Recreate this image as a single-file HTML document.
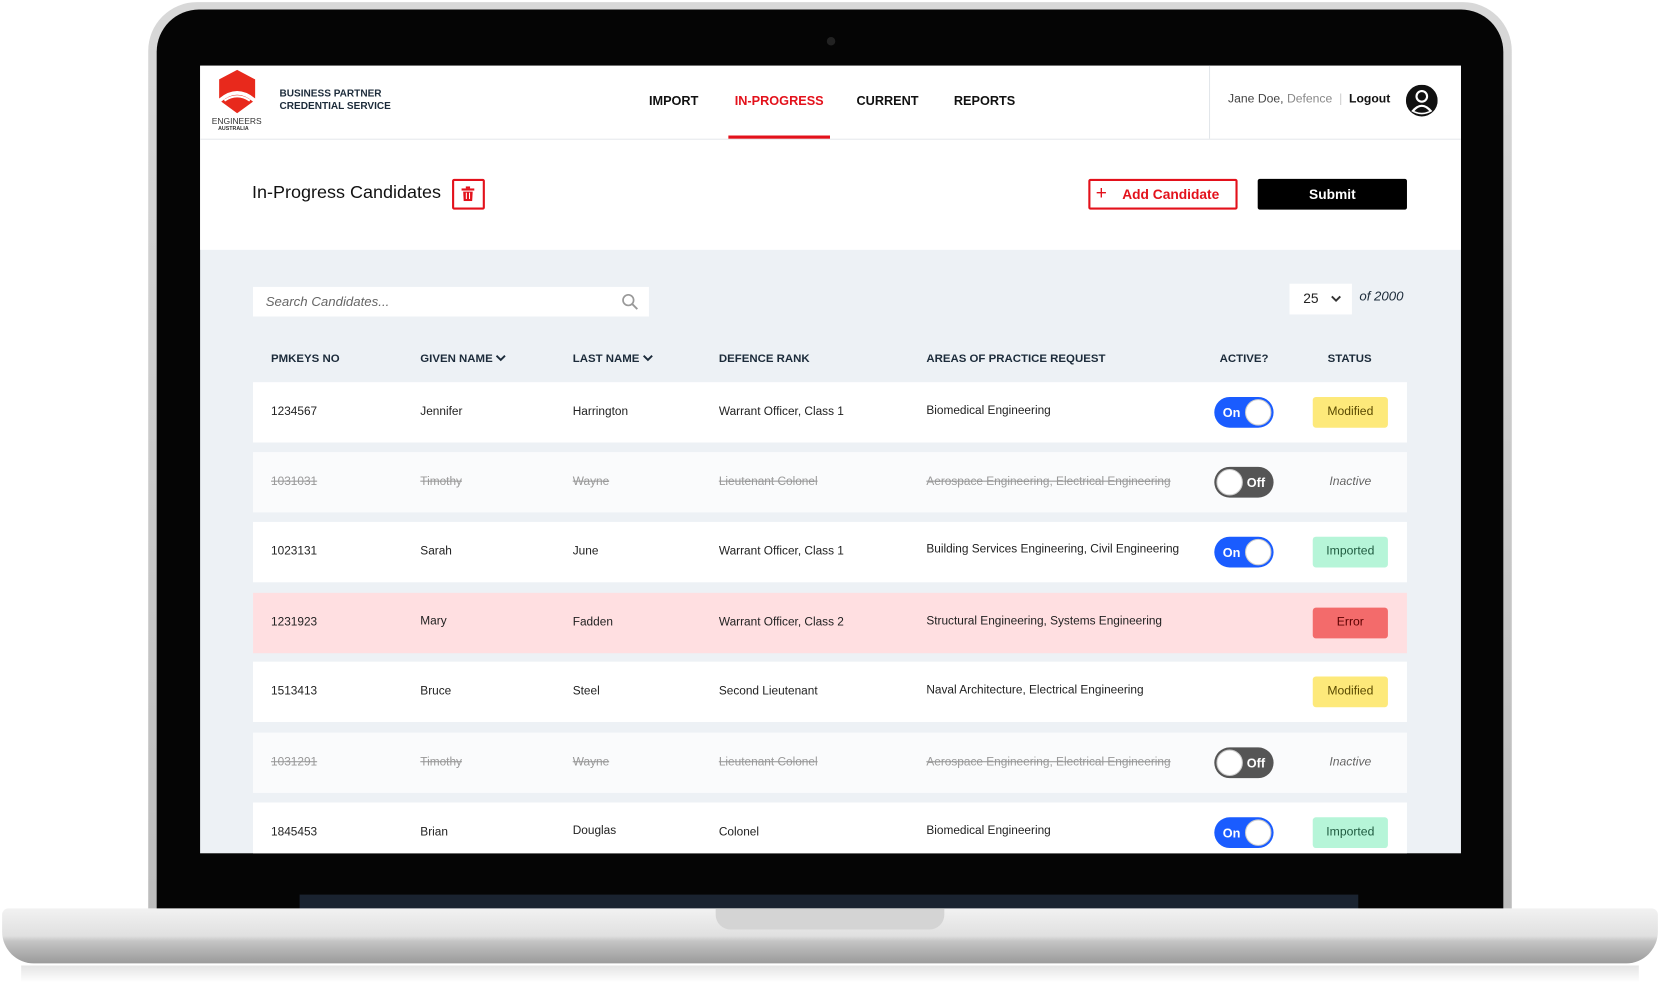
<!DOCTYPE html>
<html><head><meta charset="utf-8"><style>
*{box-sizing:border-box;margin:0;padding:0}
html,body{width:1660px;height:983px;overflow:hidden;background:#fff}
#w{position:absolute;left:0;top:0;width:1568px;height:929px;transform:scale(1.05867);transform-origin:0 0;font-family:"Liberation Sans",sans-serif}
.a{position:absolute}
.t{position:absolute;font-size:11.2px;color:#222;white-space:nowrap}
.row{position:absolute;left:239px;width:1090px;height:57px;background:#fff}
.row .t{top:22px}
.st{text-decoration:line-through;color:#999}
.tg{position:absolute;left:908px;top:14px;width:56px;height:29px;border-radius:15px;font-size:12px;font-weight:bold;color:#fff}
.on{background:#1a5cff}
.off{background:#555}
.tg i{position:absolute;top:2px;width:25px;height:25px;border-radius:50%;background:#fff;border:1px solid #ccc}
.on i{right:2px}.off i{left:2px}
.tg span{position:absolute;top:8px}
.on span{left:8px}.off span{right:8px}
.bd{position:absolute;left:1001px;top:14px;width:71px;height:29px;border-radius:3px;font-size:11.5px;text-align:center;line-height:29px}
.h{position:absolute;top:333px;font-size:10.8px;font-weight:bold;color:#1c2b3a}
</style></head><body><div id="w">
<div class="a" style="left:140px;top:2px;width:1288px;height:870px;border-radius:46px 46px 0 0;background:linear-gradient(#d8d8d8,#bcbcbc)"></div>
<div class="a" style="left:148px;top:9px;width:1272px;height:860px;border-radius:40px 40px 0 0;background:#050505"></div>
<div class="a" style="left:781px;top:35px;width:8px;height:8px;border-radius:50%;background:#222"></div>
<div class="a" style="left:283px;top:845px;width:1000px;height:15px;background:#1a2330"></div>
<div class="a" style="left:2px;top:858px;width:1564px;height:52px;border-radius:6px 6px 30px 30px;background:linear-gradient(#f2f2f2 0%,#e0e0e0 50%,#c4c4c4 60%,#9a9a9a 100%)"></div>
<div class="a" style="left:676px;top:858px;width:216px;height:20px;border-radius:0 0 14px 14px;background:#d4d4d4"></div>
<div class="a" style="left:20px;top:912px;width:1528px;height:16px;background:linear-gradient(#e4e4e4,#fff)"></div>
<div class="a" style="left:189px;top:62px;width:1191px;height:744px;background:#edf1f5;overflow:hidden">
 <div class="a" style="left:0;top:0;width:1191px;height:174px;background:#fff"></div>
 <div class="a" style="left:0;top:69px;width:1191px;height:1px;background:#e6e9ec"></div>
 <div class="a" style="left:953px;top:0;width:1px;height:69px;background:#e2e6ea"></div>
 <svg class="a" style="left:15px;top:3px" width="40" height="44" viewBox="0 0 40 44"><path d="M20 1L37 10V28Q20 14 3 28V10Z" fill="#e8291c"/><path d="M5 31Q20 18 35 31L20 42Z" fill="#e8291c"/><path d="M8 30Q20 22 32 30" stroke="#fff" stroke-width="2" fill="none"/></svg>
 <div class="t" style="left:11px;top:48px;font-size:8px;color:#333">ENGINEERS</div>
 <div class="t" style="left:17px;top:57px;font-size:5px;color:#333;font-weight:bold">AUSTRALIA</div>
 <div class="t" style="left:75px;top:21px;font-size:9.5px;font-weight:bold;color:#1c2b3a;line-height:12px">BUSINESS PARTNER<br>CREDENTIAL SERVICE</div>
 <div class="t" style="left:424px;top:26px;font-size:12px;font-weight:bold;color:#111">IMPORT</div>
 <div class="t" style="left:505px;top:26px;font-size:12px;font-weight:bold;color:#e3111b">IN-PROGRESS</div>
 <div class="a" style="left:499px;top:66px;width:96px;height:3px;background:#e3111b"></div>
 <div class="t" style="left:620px;top:26px;font-size:12px;font-weight:bold;color:#111">CURRENT</div>
 <div class="t" style="left:712px;top:26px;font-size:12px;font-weight:bold;color:#111">REPORTS</div>
 <div class="t" style="left:971px;top:26px;font-size:11.5px;color:#444">Jane Doe, <span style="color:#888">Defence</span> <span style="color:#ccc">&nbsp;|&nbsp;</span> <b style="color:#111">Logout</b></div>
 <svg class="a" style="left:1139px;top:18px" width="30" height="30" viewBox="0 0 30 30"><circle cx="15" cy="15" r="15" fill="#111"/><circle cx="15" cy="11" r="6" fill="#fff"/><path d="M5 25Q15 13 25 25Q15 31 5 25Z" fill="#fff"/><circle cx="15" cy="11" r="4" fill="#111"/><path d="M8 25Q15 17 22 25Q15 28 8 25Z" fill="#111"/></svg>
 <div class="t" style="left:49px;top:110px;font-size:17px;color:#111">In-Progress Candidates</div>
 <div class="a" style="left:238px;top:107px;width:31px;height:29px;border:2px solid #e3111b;border-radius:2px"></div>
 <svg class="a" style="left:246px;top:114px" width="14" height="14" viewBox="0 0 14 14"><rect x="1" y="2" width="12" height="2" fill="#e3111b"/><rect x="5" y="0" width="4" height="2" fill="#e3111b"/><path d="M2.5 5H11.5L11 14H3Z" fill="#e3111b"/><rect x="5" y="6" width="1" height="6" fill="#fff"/><rect x="8" y="6" width="1" height="6" fill="#fff"/></svg>
 <div class="a" style="left:839px;top:107px;width:141px;height:29px;border:2px solid #e3111b;border-radius:2px"></div>
 <div class="t" style="left:846px;top:110px;font-size:18px;color:#e3111b">+</div>
 <div class="t" style="left:871px;top:114px;font-size:13px;font-weight:bold;color:#e3111b">Add Candidate</div>
 <div class="a" style="left:999px;top:107px;width:141px;height:29px;background:#000;border-radius:2px;color:#fff;font-size:13px;font-weight:bold;text-align:center;line-height:29px">Submit</div>
 <div class="a" style="left:50px;top:209px;width:374px;height:28px;background:#fff"></div>
 <div class="t" style="left:62px;top:216px;font-size:12.5px;font-style:italic;color:#666">Search Candidates...</div>
 <svg class="a" style="left:398px;top:215px" width="16" height="16" viewBox="0 0 16 16"><circle cx="6.5" cy="6.5" r="5" stroke="#999" stroke-width="1.6" fill="none"/><path d="M10 10L15 15" stroke="#999" stroke-width="1.8"/></svg>
 <div class="a" style="left:1029px;top:206px;width:59px;height:29px;background:#fff"></div>
 <div class="t" style="left:1042px;top:212px;font-size:13px;color:#222">25</div>
 <svg class="a" style="left:1068px;top:217px" width="10" height="7" viewBox="0 0 10 7"><path d="M1 1L5 5L9 1" stroke="#333" stroke-width="1.8" fill="none"/></svg>
 <div class="t" style="left:1095px;top:211px;font-size:12.5px;font-style:italic;color:#1c2b3a">of 2000</div>
</div>
<div class="h" style="left:256px">PMKEYS NO</div>
<div class="h" style="left:397px">GIVEN NAME <svg width="10" height="7" viewBox="0 0 10 7"><path d="M1 1L5 5L9 1" stroke="#1c2b3a" stroke-width="1.8" fill="none"/></svg></div>
<div class="h" style="left:541px">LAST NAME <svg width="10" height="7" viewBox="0 0 10 7"><path d="M1 1L5 5L9 1" stroke="#1c2b3a" stroke-width="1.8" fill="none"/></svg></div>
<div class="h" style="left:679px">DEFENCE RANK</div>
<div class="h" style="left:875px">AREAS OF PRACTICE REQUEST</div>
<div class="h" style="left:1152px">ACTIVE?</div>
<div class="h" style="left:1254px">STATUS</div>

<div class="row" style="top:361px"><div class="t" style="left:17px">1234567</div><div class="t" style="left:158px">Jennifer</div><div class="t" style="left:302px">Harrington</div><div class="t" style="left:440px">Warrant Officer, Class 1</div><div class="t" style="left:636px;top:21px">Biomedical Engineering</div><div class="tg on"><span>On</span><i></i></div><div class="bd" style="background:#fde97a;color:#5a4a00">Modified</div></div>
<div class="row" style="top:427px;background:#fafbfc"><div class="t st" style="left:17px">1031031</div><div class="t st" style="left:158px">Timothy</div><div class="t st" style="left:302px">Wayne</div><div class="t st" style="left:440px">Lieutenant Colonel</div><div class="t st" style="left:636px">Aerospace Engineering, Electrical Engineering</div><div class="tg off"><i></i><span>Off</span></div><div class="bd" style="font-style:italic;color:#666">Inactive</div></div>
<div class="row" style="top:493px"><div class="t" style="left:17px">1023131</div><div class="t" style="left:158px">Sarah</div><div class="t" style="left:302px">June</div><div class="t" style="left:440px">Warrant Officer, Class 1</div><div class="t" style="left:636px;top:20px">Building Services Engineering, Civil Engineering</div><div class="tg on"><span>On</span><i></i></div><div class="bd" style="background:#b6f5d8;color:#1f5a3f">Imported</div></div>
<div class="row" style="top:560px;background:#ffdfe1"><div class="t" style="left:17px">1231923</div><div class="t" style="left:158px;top:21px">Mary</div><div class="t" style="left:302px">Fadden</div><div class="t" style="left:440px">Warrant Officer, Class 2</div><div class="t" style="left:636px;top:21px">Structural Engineering, Systems Engineering</div><div class="bd" style="background:#f36b6b;color:#5a0000">Error</div></div>
<div class="row" style="top:625px"><div class="t" style="left:17px">1513413</div><div class="t" style="left:158px">Bruce</div><div class="t" style="left:302px">Steel</div><div class="t" style="left:440px">Second Lieutenant</div><div class="t" style="left:636px;top:21px">Naval Architecture, Electrical Engineering</div><div class="bd" style="background:#fde97a;color:#5a4a00">Modified</div></div>
<div class="row" style="top:692px;background:#fafbfc"><div class="t st" style="left:17px">1031291</div><div class="t st" style="left:158px">Timothy</div><div class="t st" style="left:302px">Wayne</div><div class="t st" style="left:440px">Lieutenant Colonel</div><div class="t st" style="left:636px">Aerospace Engineering, Electrical Engineering</div><div class="tg off"><i></i><span>Off</span></div><div class="bd" style="font-style:italic;color:#666">Inactive</div></div>
<div class="row" style="top:758px;height:48px"><div class="t" style="left:17px">1845453</div><div class="t" style="left:158px">Brian</div><div class="t" style="left:302px;top:21px">Douglas</div><div class="t" style="left:440px">Colonel</div><div class="t" style="left:636px;top:21px">Biomedical Engineering</div><div class="tg on"><span>On</span><i></i></div><div class="bd" style="background:#b6f5d8;color:#1f5a3f">Imported</div></div>
</div></body></html>
